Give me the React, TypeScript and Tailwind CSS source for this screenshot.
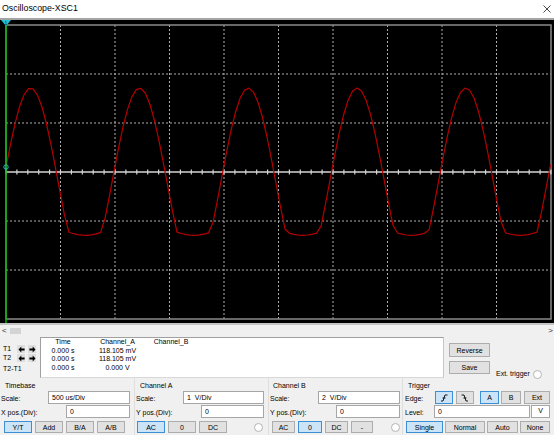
import type { ReactNode } from "react";

const L = 6;
const R = 551;
const T = 5;
const B = 299;
const colW = (R - L) / 10;
const rowH = (B - T) / 6;
const CY = T + 3 * rowH;

// sampled channel A trace, bottom half softly clipped
function tracePoints() {
  const pts: string[] = [];
  const period = 108.8;
  for (let x = L; x <= R + 0.1; x += 4.5) {
    const th = (2 * Math.PI * (x - 3.5)) / period;
    let v = -8.7 + 92.7 * Math.sin(th);
    if (v < -60) v = -60 + (v + 60) * 0.08;
    pts.push(`${x.toFixed(1)},${(CY - v).toFixed(1)}`);
  }
  return pts.join(" ");
}

function Screen() {
  const ticks: number[] = [];
  for (let x = L; x <= R; x += colW / 5) ticks.push(x);
  return (
    <svg width="554" height="303" viewBox="0 0 554 303" className="block">
      {[1, 2, 3, 4, 5, 6, 7, 8, 9].map((k) => (
        <line key={k} x1={L + k * colW} y1={T} x2={L + k * colW} y2={B} stroke="#b0b0b0" strokeDasharray="2 2" />
      ))}
      {[1, 2, 4, 5].map((k) => (
        <line key={k} x1={L} y1={T + k * rowH} x2={R} y2={T + k * rowH} stroke="#b0b0b0" strokeDasharray="2 2" />
      ))}
      <rect x={L} y={T} width={R - L} height={B - T} fill="none" stroke="#8a8a8a" strokeWidth="1.5" />
      <line x1={L} y1={CY} x2={R} y2={CY} stroke="#d4d4d4" strokeWidth="1.5" />
      {ticks.map((x, i) => (
        <line key={i} x1={x} y1={CY - 2.5} x2={x} y2={CY + 2.5} stroke="#d4d4d4" strokeWidth="1.2" />
      ))}
      <polyline points={tracePoints()} fill="none" stroke="#b40000" strokeWidth="1.2" strokeLinejoin="round" />
      <line x1={L} y1={T} x2={L} y2={303} stroke="#00b400" strokeWidth="1.5" />
      <polygon points="1,0 11,0 6,6" fill="#22c0d0" />
      <text x="6" y="4.5" fontSize="5" textAnchor="middle" fill="#003040" fontFamily="Liberation Sans, sans-serif">1</text>
      <circle cx={L} cy={147} r="2.2" fill="none" stroke="#22c0d0" strokeWidth="1" />
    </svg>
  );
}

function Btn({ children, on, className }: { children: ReactNode; on?: boolean; className: string }) {
  return (
    <div
      className={`flex h-[12px] items-center justify-center border leading-none ${
        on ? "border-[#3d8fd4] bg-[#cce4f7]" : "border-[#adadad] bg-[#e1e1e1]"
      } ${className}`}
    >
      {children}
    </div>
  );
}

function Field({ value, className }: { value: string; className: string }) {
  return (
    <div className={`flex h-[13px] items-center whitespace-pre border border-[#a6a6a6] bg-white pl-[3px] leading-none ${className}`}>
      {value}
    </div>
  );
}

function Radio() {
  return <div className="h-[9px] w-[9px] rounded-full border border-[#b4b4b4] bg-white" />;
}

function Arrow({ flip }: { flip?: boolean }) {
  return (
    <div className="flex h-[8px] w-[8px] items-center justify-center bg-[#dedede]">
      <svg width="7" height="7" viewBox="0 0 7 7" className={flip ? "-scale-x-100" : ""}>
        <path d="M0.5 3.5 3.3 0.6V2.4H6.6V4.6H3.3V6.4Z" fill="#000" />
      </svg>
    </div>
  );
}

function Edge({ rising }: { rising?: boolean }) {
  return (
    <svg width="8" height="8" viewBox="0 0 8 8">
      <path
        d={rising ? "M1 7H3L5 1H7.5M2.5 4H5.5" : "M0.5 1H3L5 7H7M2.5 4H5.5"}
        fill="none"
        stroke="#000"
        strokeWidth="0.9"
      />
    </svg>
  );
}

export default function App() {
  return (
    <div className="flex h-[435px] w-[554px] flex-col overflow-hidden bg-[#f0f0f0] font-['Liberation_Sans',Arial,sans-serif] text-[7px] text-black">
      <div className="flex h-[18px] items-center justify-between bg-white pl-[2px] pr-[3px]">
        <span className="text-[8.8px]">Oscilloscope-XSC1</span>
        <svg width="8" height="8" viewBox="0 0 8 8">
          <path d="M0.5 0.5 7.5 7.5M7.5 0.5 0.5 7.5" stroke="#333" strokeWidth="0.9" />
        </svg>
      </div>
      <div className="h-[2px] bg-[#a4a4a4]" />
      <div className="h-[303px] bg-black">
        <Screen />
      </div>
      <div className="h-[2px] bg-[#c4c4c4]" />

      <div className="flex h-[11px] items-center">
        <span className="w-[8px] pl-[2px] text-[8px] leading-none text-[#333]">&lt;</span>
        <div className="ml-[2px] h-[6px] w-[11px] bg-[#d4d4d4]" />
        <span className="ml-auto pr-[1px] text-[8px] leading-none text-[#333]">&gt;</span>
      </div>

      <div className="flex h-[42px]">
        <div className="flex w-[40px] flex-col pl-[3px] pt-[9px]">
          <div className="flex h-[8px] items-center">
            <span className="w-[14px]">T1</span>
            <Arrow />
            <div className="w-[3px]" />
            <Arrow flip />
          </div>
          <div className="mt-[1px] flex h-[8px] items-center">
            <span className="w-[14px]">T2</span>
            <Arrow />
            <div className="w-[3px]" />
            <Arrow flip />
          </div>
          <div className="mt-[3px] flex h-[8px] items-center">T2-T1</div>
        </div>
        <div className="mt-[1px] h-[41px] w-[404px] border border-[#a0a0a0] border-b-[#d8d8d8] border-r-[#c8c8c8] bg-white">
          <div className="grid grid-cols-[44px_65px_42px] text-center leading-[8.7px]">
            <span>Time</span>
            <span>Channel_A</span>
            <span>Channel_B</span>
            <span>0.000 s</span>
            <span>118.105 mV</span>
            <span />
            <span>0.000 s</span>
            <span>118.105 mV</span>
            <span />
            <span>0.000 s</span>
            <span>0.000 V</span>
            <span />
          </div>
        </div>
        <div className="ml-[5px] flex flex-col pt-[7px]">
          <Btn className="h-[14px] w-[41px]">Reverse</Btn>
          <Btn className="mt-[4px] h-[13px] w-[41px]">Save</Btn>
        </div>
        <div className="ml-[6px] flex h-[8px] items-center gap-[3px] self-end">
          <span>Ext. trigger</span>
          <Radio />
        </div>
      </div>

      <div className="flex h-[57px]">
        <div className="flex w-[134px] flex-col">
          <div className="h-[13px] pl-[5px] pt-[3px] leading-[9px]">Timebase</div>
          <div className="flex h-[14px]">
            <span className="w-[48px] pl-[1px] pt-[3px]">Scale:</span>
            <Field className="w-[82px]" value="500 us/Div" />
          </div>
          <div className="flex h-[14px]">
            <span className="w-[66px] pl-[1px] pt-[3px]">X pos.(Div):</span>
            <Field className="w-[64px]" value="0" />
          </div>
          <div className="mt-[2px] flex gap-[3px] pl-[4px]">
            <Btn on className="w-[28px]">Y/T</Btn>
            <Btn className="w-[28px]">Add</Btn>
            <Btn className="w-[28px]">B/A</Btn>
            <Btn className="w-[28px]">A/B</Btn>
          </div>
        </div>

        <div className="flex w-[134px] flex-col border-l border-[#dedede]">
          <div className="h-[13px] pl-[5px] pt-[3px] leading-[9px]">Channel A</div>
          <div className="flex h-[14px]">
            <span className="w-[48px] pl-[1px] pt-[3px]">Scale:</span>
            <Field className="w-[81px]" value="1  V/Div" />
          </div>
          <div className="flex h-[14px]">
            <span className="w-[66px] pl-[1px] pt-[3px]">Y pos.(Div):</span>
            <Field className="w-[63px]" value="0" />
          </div>
          <div className="mt-[2px] flex items-center gap-[3px] pl-[2px]">
            <Btn on className="w-[28px]">AC</Btn>
            <Btn className="w-[28px]">0</Btn>
            <Btn className="w-[28px]">DC</Btn>
            <div className="ml-[24px]">
              <Radio />
            </div>
          </div>
        </div>

        <div className="flex w-[134px] flex-col border-l border-[#dedede]">
          <div className="h-[13px] pl-[4px] pt-[3px] leading-[9px]">Channel B</div>
          <div className="flex h-[14px]">
            <span className="w-[49px] pl-[1px] pt-[3px]">Scale:</span>
            <Field className="w-[82px]" value="2  V/Div" />
          </div>
          <div className="flex h-[14px]">
            <span className="w-[67px] pl-[1px] pt-[3px]">Y pos.(Div):</span>
            <Field className="w-[64px]" value="0" />
          </div>
          <div className="mt-[2px] flex items-center gap-[3px] pl-[3px]">
            <Btn className="w-[23px]">AC</Btn>
            <Btn on className="w-[24px]">0</Btn>
            <Btn className="w-[23px]">DC</Btn>
            <Btn className="w-[22px]">-</Btn>
            <div className="ml-[15px]">
              <Radio />
            </div>
          </div>
        </div>

        <div className="flex flex-1 flex-col border-l border-[#dedede]">
          <div className="h-[13px] pl-[5px] pt-[3px] leading-[9px]">Trigger</div>
          <div className="flex h-[14px]">
            <span className="w-[32px] pl-[2px] pt-[3px]">Edge:</span>
            <Btn on className="h-[13px] w-[18px]">
              <Edge rising />
            </Btn>
            <Btn className="ml-[3px] h-[13px] w-[18px]">
              <Edge />
            </Btn>
            <Btn on className="ml-[6px] h-[13px] w-[19px]">A</Btn>
            <Btn className="ml-[2px] h-[13px] w-[20px]">B</Btn>
            <Btn className="ml-[3px] h-[13px] w-[26px]">Ext</Btn>
          </div>
          <div className="flex h-[14px]">
            <span className="w-[31px] pl-[2px] pt-[3px]">Level:</span>
            <Field className="w-[96px]" value="0" />
            <div className="ml-[1px] flex h-[13px] w-[19px] items-center justify-center border border-[#a6a6a6] bg-white">V</div>
          </div>
          <div className="mt-[2px] flex gap-[2px] pl-[3px]">
            <Btn on className="w-[37px]">Single</Btn>
            <Btn className="w-[40px]">Normal</Btn>
            <Btn className="w-[31px]">Auto</Btn>
            <Btn className="w-[30px]">None</Btn>
          </div>
        </div>
      </div>
    </div>
  );
}
